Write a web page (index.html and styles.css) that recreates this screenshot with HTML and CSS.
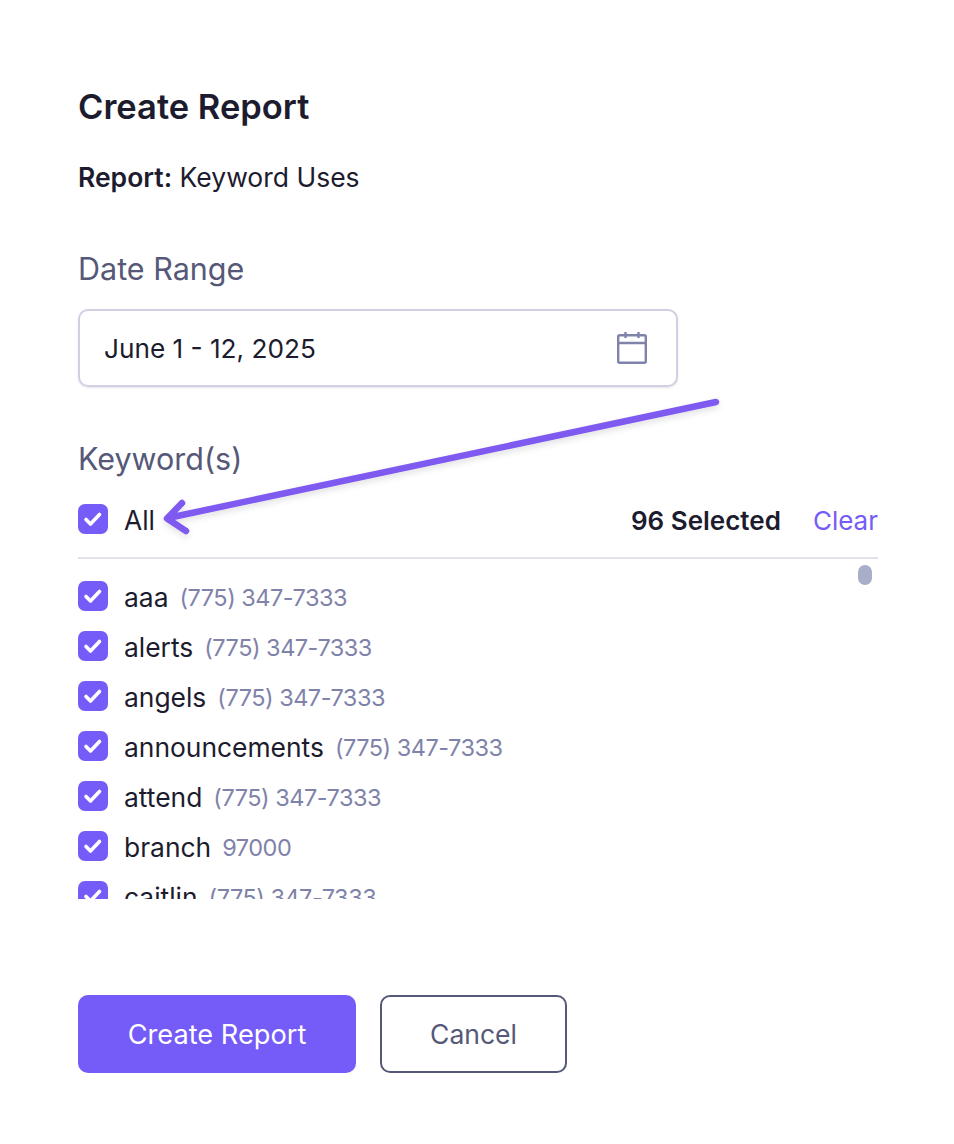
FILE: index.html
```html
<!DOCTYPE html>
<html lang="en">
<head>
    <meta charset="UTF-8">
    <meta name="viewport" content="width=device-width, initial-scale=1.0">
    <title>Create Report</title>
    <link rel="stylesheet" href="styles.css">
</head>
<body>
    <div class="container">
        <h1>Create Report</h1>
        <p class="report-name"><strong>Report:</strong> Keyword Uses</p>

        <label class="field-label date-label">Date Range</label>
        <div class="date-input">
            <span>June 1 - 12, 2025</span>
            <svg class="calendar" width="32" height="34" viewBox="0 0 32 34" fill="none" stroke="#7f83aa" stroke-width="2.4">
                <rect x="2.2" y="4.2" width="27.6" height="27.6" rx="1.5"/>
                <path d="M2.2 12h27.6M9.5 1v6M22.5 1v6"/>
            </svg>
        </div>

        <label class="field-label keyword-label">Keyword(s)</label>
        <div class="all-row">
            <span class="check">
                <svg width="22" height="22" viewBox="0 0 22 22" fill="none" stroke="#fff" stroke-width="3.6" stroke-linecap="round" stroke-linejoin="round"><path d="M4 11.500l4.500 4.500 9-9.500"/></svg>
            </span>
            <span class="keyword">All</span>
            <span class="selected">96 Selected</span>
            <a class="clear">Clear</a>
        </div>

        <div class="list-wrap">
            <div class="scroll-thumb"></div>
            <div class="keyword-list">
                <div class="item">
                    <span class="check"><svg width="22" height="22" viewBox="0 0 22 22" fill="none" stroke="#fff" stroke-width="3.6" stroke-linecap="round" stroke-linejoin="round"><path d="M4 11.500l4.500 4.500 9-9.500"/></svg></span>
                    <span class="keyword">aaa</span><span class="phone">(775) 347-7333</span>
                </div>
                <div class="item">
                    <span class="check"><svg width="22" height="22" viewBox="0 0 22 22" fill="none" stroke="#fff" stroke-width="3.6" stroke-linecap="round" stroke-linejoin="round"><path d="M4 11.500l4.500 4.500 9-9.500"/></svg></span>
                    <span class="keyword">alerts</span><span class="phone">(775) 347-7333</span>
                </div>
                <div class="item">
                    <span class="check"><svg width="22" height="22" viewBox="0 0 22 22" fill="none" stroke="#fff" stroke-width="3.6" stroke-linecap="round" stroke-linejoin="round"><path d="M4 11.500l4.500 4.500 9-9.500"/></svg></span>
                    <span class="keyword">angels</span><span class="phone">(775) 347-7333</span>
                </div>
                <div class="item">
                    <span class="check"><svg width="22" height="22" viewBox="0 0 22 22" fill="none" stroke="#fff" stroke-width="3.6" stroke-linecap="round" stroke-linejoin="round"><path d="M4 11.500l4.500 4.500 9-9.500"/></svg></span>
                    <span class="keyword">announcements</span><span class="phone">(775) 347-7333</span>
                </div>
                <div class="item">
                    <span class="check"><svg width="22" height="22" viewBox="0 0 22 22" fill="none" stroke="#fff" stroke-width="3.6" stroke-linecap="round" stroke-linejoin="round"><path d="M4 11.500l4.500 4.500 9-9.500"/></svg></span>
                    <span class="keyword">attend</span><span class="phone">(775) 347-7333</span>
                </div>
                <div class="item">
                    <span class="check"><svg width="22" height="22" viewBox="0 0 22 22" fill="none" stroke="#fff" stroke-width="3.6" stroke-linecap="round" stroke-linejoin="round"><path d="M4 11.500l4.500 4.500 9-9.500"/></svg></span>
                    <span class="keyword">branch</span><span class="phone">97000</span>
                </div>
                <div class="item">
                    <span class="check"><svg width="22" height="22" viewBox="0 0 22 22" fill="none" stroke="#fff" stroke-width="3.6" stroke-linecap="round" stroke-linejoin="round"><path d="M4 11.500l4.500 4.500 9-9.500"/></svg></span>
                    <span class="keyword">caitlin</span><span class="phone">(775) 347-7333</span>
                </div>
            </div>
        </div>

        <div class="actions">
            <button class="btn btn-primary">Create Report</button>
            <button class="btn btn-outline">Cancel</button>
        </div>
    </div>

    <!-- annotation arrow drawn over the form -->
    <svg class="arrow" width="954" height="1144" viewBox="0 0 954 1144" fill="none">
        <defs>
            <filter id="arrow-shadow" x="-5%" y="-20%" width="110%" height="150%">
                <feDropShadow dx="0" dy="3" stdDeviation="3" flood-color="#000" flood-opacity="0.12"/>
            </filter>
        </defs>
        <path filter="url(#arrow-shadow)" d="M716 402L168 518M182 503l-15 15.500L186 531" stroke="#7f5af0" stroke-width="6.500" stroke-linecap="round" stroke-linejoin="round"/>
    </svg>
</body>
</html>
```

FILE: styles.css
```css
body {
    font-family: Inter, "Noto Sans", sans-serif;
    background-color: #fff;
    color: #1c1c2e;
    margin: 0;
}
.container {
    width: 800px;
    padding: 88px 0 0 78px;
}
h1 {
    font-size: 34.5px;
    line-height: 38px;
    font-weight: 600;
    margin: 0;
}
.report-name {
    font-size: 26.5px;
    line-height: 32px;
    margin: 35px 0 0;
}
.report-name strong {
    font-weight: 600;
}
.field-label {
    display: block;
    font-size: 30.5px;
    line-height: 36px;
    color: #565878;
}
.date-label {
    margin-top: 58px;
}
.date-input {
    display: flex;
    align-items: center;
    justify-content: space-between;
    box-sizing: border-box;
    width: 600px;
    height: 78px;
    margin-top: 22px;
    padding: 0 28px 0 24px;
    border: 2px solid #cfd0e3;
    border-radius: 10px;
    box-shadow: 0 1px 2px rgba(60, 60, 110, 0.12);
    font-size: 26.2px;
}
.calendar {
    display: block;
}
.keyword-label {
    margin-top: 54px;
}
.all-row {
    display: flex;
    align-items: center;
    height: 36px;
    margin-top: 24px;
    padding-bottom: 20px;
    border-bottom: 2px solid #e2e4ec;
    font-size: 26.4px;
}
.check {
    display: flex;
    align-items: center;
    justify-content: center;
    flex: none;
    width: 30px;
    height: 30px;
    margin-right: 16px;
    border-radius: 7px;
    background: #755bf7;
}
.keyword, .phone, .selected, .clear {
    padding-top: 2px;
}
.selected {
    margin-left: auto;
    font-size: 26px;
    font-weight: 600;
}
.clear {
    margin-left: 32px;
    font-size: 26px;
    color: #755bf7;
}
.list-wrap {
    position: relative;
}
.scroll-thumb {
    position: absolute;
    top: 6px;
    right: 6px;
    width: 14px;
    height: 20px;
    border-radius: 7px;
    background: #a8adc8;
}
.keyword-list {
    height: 340px;
    overflow: hidden;
}
.item {
    display: flex;
    align-items: center;
    height: 50px;
    font-size: 26.4px;
}
.item:first-child {
    margin-top: 12px;
}
.phone {
    margin-left: 11px;
    font-size: 23.5px;
    letter-spacing: -0.5px;
    color: #7f83aa;
}
.actions {
    display: flex;
    gap: 24px;
    margin-top: 96px;
}
.btn {
    height: 78px;
    border-radius: 10px;
    font-family: inherit;
    font-size: 26.5px;
}
.btn-primary {
    width: 278px;
    border: 0;
    background: #755bf7;
    color: #fff;
    font-size: 27.2px;
}
.btn-outline {
    width: 187px;
    border: 2px solid #565878;
    background: #fff;
    color: #565878;
}
.arrow {
    position: absolute;
    top: 0;
    left: 0;
}
```
